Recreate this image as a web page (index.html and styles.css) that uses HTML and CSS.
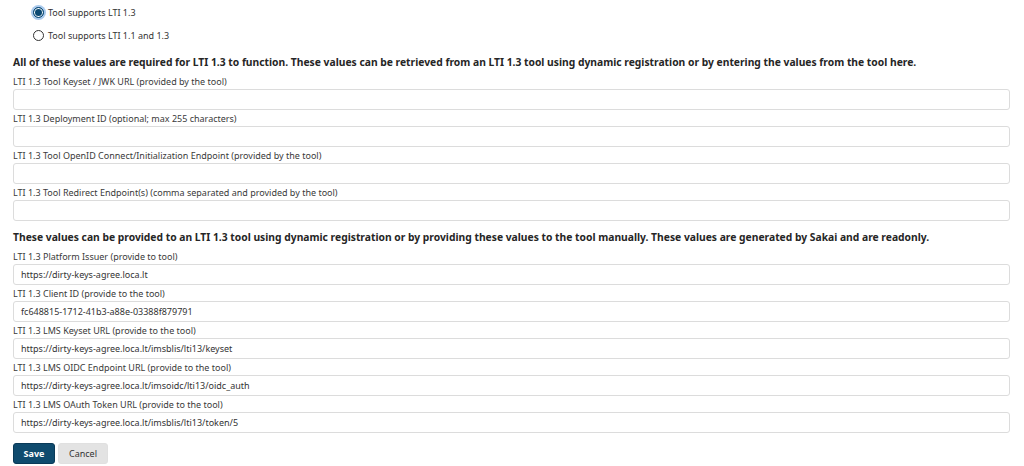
FILE: index.html
```html
<!DOCTYPE html>
<html>
<head>
<meta charset="utf-8">
<link rel="stylesheet" href="styles.css">
</head>
<body>
<form class="page">
  <div class="radios">
    <label class="radio-row"><span class="radio checked"></span>Tool supports LTI 1.3</label>
    <label class="radio-row"><span class="radio"></span>Tool supports LTI 1.1 and 1.3</label>
  </div>
  <h4 class="section">All of these values are required for LTI 1.3 to function. These values can be retrieved from an LTI 1.3 tool using dynamic registration or by entering the values from the tool here.</h4>
  <div class="field"><label>LTI 1.3 Tool Keyset / JWK URL (provided by the tool)</label><div class="input"></div></div>
  <div class="field"><label>LTI 1.3 Deployment ID (optional; max 255 characters)</label><div class="input"></div></div>
  <div class="field"><label>LTI 1.3 Tool OpenID Connect/Initialization Endpoint (provided by the tool)</label><div class="input"></div></div>
  <div class="field"><label>LTI 1.3 Tool Redirect Endpoint(s) (comma separated and provided by the tool)</label><div class="input"></div></div>
  <h4 class="section second">These values can be provided to an LTI 1.3 tool using dynamic registration or by providing these values to the tool manually. These values are generated by Sakai and are readonly.</h4>
  <div class="field"><label>LTI 1.3 Platform Issuer (provide to tool)</label><div class="input">https://dirty-keys-agree.loca.lt</div></div>
  <div class="field"><label>LTI 1.3 Client ID (provide to the tool)</label><div class="input">fc648815-1712-41b3-a88e-03388f879791</div></div>
  <div class="field"><label>LTI 1.3 LMS Keyset URL (provide to the tool)</label><div class="input">https://dirty-keys-agree.loca.lt/imsblis/lti13/keyset</div></div>
  <div class="field"><label>LTI 1.3 LMS OIDC Endpoint URL (provide to the tool)</label><div class="input">https://dirty-keys-agree.loca.lt/imsoidc/lti13/oidc_auth</div></div>
  <div class="field"><label>LTI 1.3 LMS OAuth Token URL (provide to the tool)</label><div class="input">https://dirty-keys-agree.loca.lt/imsblis/lti13/token/5</div></div>
  <div class="actions">
    <span class="btn primary">Save</span>
    <span class="btn">Cancel</span>
  </div>
</form>
</body>
</html>
```

FILE: styles.css
```css
html, body {
  margin: 0;
  padding: 0;
  background: #fff;
}
body {
  font-family: "Noto Sans", "Open Sans", "DejaVu Sans", sans-serif;
  color: #333;
  font-size: 9px;
}
.page {
  padding: 5px 14px 0 13px;
}
.radios {
  display: flex;
  flex-direction: column;
  gap: 8px;
  padding-left: 20px;
}
.radio-row {
  display: flex;
  align-items: center;
  gap: 4px;
  height: 15px;
  color: #333;
}
.radio {
  width: 9px;
  height: 9px;
  border: 1px solid #333;
  border-radius: 50%;
  box-sizing: content-box;
  background: #fff;
}
.radio.checked {
  background: #0b4a73;
  border-color: #0b4a73;
  box-shadow: inset 0 0 0 1px #fff, 0 0 0 2px #a9c9ec;
}
.section {
  margin: 12px 0 6px;
  font-size: 10.3px;
  font-weight: 700;
  line-height: 14px;
  color: #262626;
}
.section.second {
  margin-top: 9px;
}
.field {
  display: flex;
  flex-direction: column;
  margin-bottom: 2px;
}
.field label {
  line-height: 14px;
  height: 14px;
  color: #3a3a3a;
}
.input {
  height: 19px;
  border: 1px solid #dcdcdc;
  border-radius: 3px;
  padding: 0 7px;
  line-height: 19px;
  color: #333;
}
.actions {
  display: flex;
  gap: 3px;
  margin-top: 10px;
}
.btn {
  display: inline-flex;
  align-items: center;
  justify-content: center;
  height: 21px;
  padding: 0 10px;
  border-radius: 3px;
  background: #e3e3e3;
  color: #333;
  font-size: 9px;
  border: 1px solid #e0e0e0;
  box-sizing: border-box;
}
.btn.primary {
  background: #0f4b6e;
  border-color: #0a3a58;
  color: #fff;
  font-weight: 700;
  width: 42px;
}
```
